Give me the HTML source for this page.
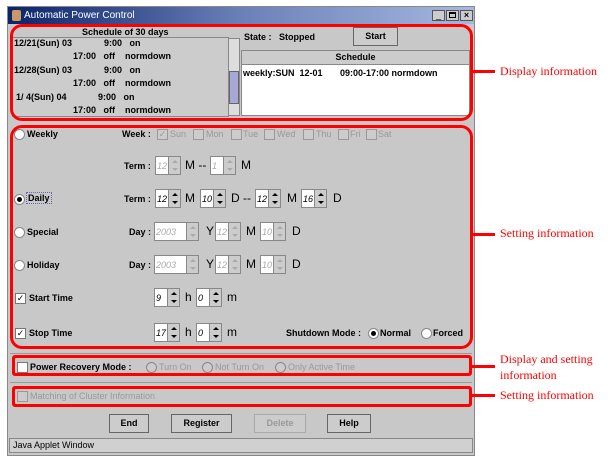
<!DOCTYPE html>
<html><head><meta charset="utf-8"><style>
*{margin:0;padding:0;box-sizing:border-box}
body{width:612px;height:462px;background:#fff;position:relative;overflow:hidden;font-family:"Liberation Sans",sans-serif;font-size:9px;color:#000}
.a{position:absolute;white-space:nowrap}
.b{font-weight:bold}
.g{color:#999}
.sp{position:absolute;height:19px}
.sp .t{position:absolute;left:0;top:0;bottom:0;background:#fff;border:1px solid #888;border-right:none;font-style:italic;font-size:9px;padding:4px 0 0 1px;overflow:hidden}
.sp .u{position:absolute;top:0;bottom:0;width:13px;background:#ccc;border:1px solid #888}
.sp .u:before{content:"";position:absolute;left:3px;top:3px;border:3px solid transparent;border-top:none;border-bottom:3px solid #000}
.sp .u:after{content:"";position:absolute;left:3px;bottom:3px;border:3px solid transparent;border-bottom:none;border-top:3px solid #000}
.sp.d .t{color:#aaa}
.sp.d .u:before{border-bottom-color:#aaa}.sp.d .u:after{border-top-color:#aaa}
.rd{position:absolute;width:11px;height:11px;border-radius:50%;background:#fff;border:1px solid #888}
.rd.on:after{content:"";position:absolute;left:2px;top:2px;width:5px;height:5px;border-radius:50%;background:#000}
.ck{position:absolute;width:11px;height:11px;background:#fff;border:1px solid #777;font-size:9px;line-height:9px;text-align:center}
.ck.dis{background:#ccc;border-color:#999;color:#999}
.red{position:absolute;border:3px solid #f00;border-radius:12px}
.ann{position:absolute;color:#f00;font-family:"Liberation Serif",serif;font-size:12px;white-space:nowrap}
.ln{position:absolute;height:3px;background:#f00}
.btn{position:absolute;height:19px;border:1px solid #666;background:#ccc;font-weight:bold;text-align:center;line-height:17px}
.L{font-size:12px}
</style></head><body>
<div class="a" style="left:7px;top:6px;width:468px;height:450px;background:#c8c8c8;border:1px solid #888"></div>
<div class="a" style="left:8px;top:7px;width:466px;height:17px;background:linear-gradient(90deg,#0a246a,#6a80b8 50%,#a6b8e0)"></div>
<div class="a" style="left:24px;top:10px;color:#fff;font-size:10px">Automatic Power Control</div>
<div class="a" style="left:12px;top:10px;width:9px;height:11px;background:#c96;border-radius:2px"></div>
<div class="a" style="left:432px;top:10px;width:13px;height:11px;background:#ccc;border:1px solid #555;font-size:9px;line-height:8px;text-align:center">_</div>
<div class="a" style="left:446px;top:10px;width:13px;height:11px;background:#ccc;border:1px solid #555"><div style="margin:1px 2px;width:7px;height:6px;border:1px solid #000;border-top-width:2px"></div></div>
<div class="a" style="left:460px;top:10px;width:13px;height:11px;background:#ccc;border:1px solid #555;font-size:9px;line-height:9px;text-align:center;font-weight:bold">×</div>

<div class="a b" style="left:82px;top:27px">Schedule of 30 days</div>
<div class="a" style="left:12px;top:37px;width:217px;height:80px;background:#ccc;border:1px solid #888"></div>
<div class="a b" style="left:14px;top:38px">12/21(Sun) 03</div><div class="a b" style="left:104px;top:38px">9:00&nbsp;&nbsp; on</div>
<div class="a b" style="left:73px;top:51px">17:00&nbsp;&nbsp; off&nbsp;&nbsp;&nbsp; normdown</div>
<div class="a b" style="left:14px;top:65px">12/28(Sun) 03</div><div class="a b" style="left:104px;top:65px">9:00&nbsp;&nbsp; on</div>
<div class="a b" style="left:73px;top:78px">17:00&nbsp;&nbsp; off&nbsp;&nbsp;&nbsp; normdown</div>
<div class="a b" style="left:16px;top:92px">1/ 4(Sun) 04</div><div class="a b" style="left:98px;top:92px">9:00&nbsp;&nbsp; on</div>
<div class="a b" style="left:73px;top:105px">17:00&nbsp;&nbsp; off&nbsp;&nbsp;&nbsp; normdown</div>
<div class="a" style="left:228px;top:38px;width:12px;height:78px;background:#ddd;border:1px solid #888"></div>
<div class="a" style="left:229px;top:71px;width:10px;height:33px;background:#a8a8d8;border:1px solid #666"></div>

<div class="a b" style="left:244px;top:32px">State :&nbsp;&nbsp; Stopped</div>
<div class="btn" style="left:353px;top:27px;width:45px">Start</div>
<div class="a" style="left:241px;top:50px;width:229px;height:66px;background:#fff;border:1px solid #888"></div>
<div class="a b" style="left:242px;top:51px;width:227px;height:14px;background:#ccc;border-bottom:1px solid #888;text-align:center;line-height:13px">Schedule</div>
<div class="a b" style="left:243px;top:68px">weekly:SUN&nbsp; 12-01</div>
<div class="a b" style="left:340px;top:68px">09:00-17:00 normdown</div>

<div class="rd" style="left:14px;top:129px"></div><div class="a b" style="left:27px;top:129px">Weekly</div>
<div class="a b" style="left:122px;top:129px">Week :</div>
<div class="ck dis" style="left:157px;top:129px">✓</div><div class="a g" style="left:170px;top:129px">Sun</div>
<div class="ck dis" style="left:193px;top:129px"></div><div class="a g" style="left:206px;top:129px">Mon</div>
<div class="ck dis" style="left:231px;top:129px"></div><div class="a g" style="left:243px;top:129px">Tue</div>
<div class="ck dis" style="left:264px;top:129px"></div><div class="a g" style="left:277px;top:129px">Wed</div>
<div class="ck dis" style="left:303px;top:129px"></div><div class="a g" style="left:316px;top:129px">Thu</div>
<div class="ck dis" style="left:338px;top:129px"></div><div class="a g" style="left:350px;top:129px">Fri</div>
<div class="ck dis" style="left:366px;top:129px"></div><div class="a g" style="left:378px;top:129px">Sat</div>

<div class="a b" style="left:124px;top:161px">Term :</div>
<div class="sp d" style="left:155px;top:156px;width:26px"><div class="t" style="width:13px">12</div><div class="u" style="left:13px"></div></div>
<div class="a L" style="left:185px;top:158px">M --</div>
<div class="sp d" style="left:210px;top:156px;width:26px"><div class="t" style="width:13px">1</div><div class="u" style="left:13px"></div></div>
<div class="a L" style="left:241px;top:158px">M</div>

<div class="rd on" style="left:14px;top:194px"></div><div class="a b" style="left:26px;top:192px;border:1px dotted #66a;padding:0 1px">Daily</div>
<div class="a b" style="left:124px;top:194px">Term :</div>
<div class="sp" style="left:155px;top:189px;width:26px"><div class="t" style="width:13px">12</div><div class="u" style="left:13px"></div></div>
<div class="a L" style="left:185px;top:191px">M</div>
<div class="sp" style="left:200px;top:189px;width:26px"><div class="t" style="width:13px">10</div><div class="u" style="left:13px"></div></div>
<div class="a L" style="left:231px;top:191px">D --</div>
<div class="sp" style="left:255px;top:189px;width:26px"><div class="t" style="width:13px">12</div><div class="u" style="left:13px"></div></div>
<div class="a L" style="left:287px;top:191px">M</div>
<div class="sp" style="left:301px;top:189px;width:26px"><div class="t" style="width:13px">16</div><div class="u" style="left:13px"></div></div>
<div class="a L" style="left:333px;top:191px">D</div>

<div class="rd" style="left:14px;top:227px"></div><div class="a b" style="left:27px;top:227px">Special</div>
<div class="a b" style="left:129px;top:227px">Day :</div>
<div class="sp d" style="left:154px;top:222px;width:45px"><div class="t" style="width:32px">2003</div><div class="u" style="left:32px"></div></div>
<div class="a L" style="left:206px;top:224px">Y</div>
<div class="sp d" style="left:215px;top:222px;width:26px"><div class="t" style="width:13px">12</div><div class="u" style="left:13px"></div></div>
<div class="a L" style="left:246px;top:224px">M</div>
<div class="sp d" style="left:260px;top:222px;width:26px"><div class="t" style="width:13px">10</div><div class="u" style="left:13px"></div></div>
<div class="a L" style="left:292px;top:224px">D</div>

<div class="rd" style="left:14px;top:260px"></div><div class="a b" style="left:27px;top:260px">Holiday</div>
<div class="a b" style="left:129px;top:260px">Day :</div>
<div class="sp d" style="left:154px;top:255px;width:45px"><div class="t" style="width:32px">2003</div><div class="u" style="left:32px"></div></div>
<div class="a L" style="left:206px;top:257px">Y</div>
<div class="sp d" style="left:215px;top:255px;width:26px"><div class="t" style="width:13px">12</div><div class="u" style="left:13px"></div></div>
<div class="a L" style="left:246px;top:257px">M</div>
<div class="sp d" style="left:260px;top:255px;width:26px"><div class="t" style="width:13px">10</div><div class="u" style="left:13px"></div></div>
<div class="a L" style="left:292px;top:257px">D</div>

<div class="ck" style="left:15px;top:293px">✓</div><div class="a b" style="left:29px;top:293px">Start Time</div>
<div class="sp" style="left:154px;top:288px;width:26px"><div class="t" style="width:13px">9</div><div class="u" style="left:13px"></div></div>
<div class="a L" style="left:185px;top:290px">h</div>
<div class="sp" style="left:196px;top:288px;width:26px"><div class="t" style="width:13px">0</div><div class="u" style="left:13px"></div></div>
<div class="a L" style="left:227px;top:290px">m</div>

<div class="ck" style="left:15px;top:328px">✓</div><div class="a b" style="left:29px;top:328px">Stop Time</div>
<div class="sp" style="left:154px;top:323px;width:26px"><div class="t" style="width:13px">17</div><div class="u" style="left:13px"></div></div>
<div class="a L" style="left:185px;top:325px">h</div>
<div class="sp" style="left:196px;top:323px;width:26px"><div class="t" style="width:13px">0</div><div class="u" style="left:13px"></div></div>
<div class="a L" style="left:227px;top:325px">m</div>
<div class="a b" style="left:286px;top:328px">Shutdown Mode :</div>
<div class="rd on" style="left:368px;top:328px"></div><div class="a b" style="left:380px;top:328px">Normal</div>
<div class="rd" style="left:421px;top:328px"></div><div class="a b" style="left:433px;top:328px">Forced</div>

<div class="a" style="left:10px;top:353px;width:462px;height:1px;background:#999"></div>
<div class="ck" style="left:17px;top:362px"></div><div class="a b" style="left:30px;top:362px">Power Recovery Mode :</div>
<div class="rd" style="left:146px;top:362px;background:#ccc"></div><div class="a g" style="left:159px;top:362px">Turn On</div>
<div class="rd" style="left:202px;top:362px;background:#ccc"></div><div class="a g" style="left:215px;top:362px">Not Turn On</div>
<div class="rd" style="left:275px;top:362px;background:#ccc"></div><div class="a g" style="left:288px;top:362px">Only Active Time</div>
<div class="a" style="left:10px;top:382px;width:462px;height:1px;background:#999"></div>
<div class="ck dis" style="left:17px;top:391px"></div><div class="a g" style="left:30px;top:391px">Matching of Cluster Information</div>

<div class="btn" style="left:109px;top:414px;width:40px">End</div>
<div class="btn" style="left:171px;top:414px;width:61px">Register</div>
<div class="btn" style="left:254px;top:414px;width:52px;color:#999;border-color:#aaa">Delete</div>
<div class="btn" style="left:327px;top:414px;width:44px">Help</div>
<div class="a" style="left:9px;top:438px;width:464px;height:15px;background:#d0d0d0;border:1px solid #888;padding-left:3px;font-size:9px;line-height:13px">Java Applet Window</div>

<div class="red" style="left:10px;top:24px;width:463px;height:97px"></div>
<div class="red" style="left:10px;top:125px;width:463px;height:224px"></div>
<div class="red" style="left:12px;top:355px;width:460px;height:21px;border-radius:3px"></div>
<div class="red" style="left:12px;top:386px;width:460px;height:21px;border-radius:3px"></div>

<div class="ln" style="left:472px;top:70px;width:23px"></div>
<div class="ann" style="left:500px;top:64px">Display information</div>
<div class="ln" style="left:472px;top:233px;width:23px"></div>
<div class="ann" style="left:500px;top:226px">Setting information</div>
<div class="ln" style="left:472px;top:365px;width:23px"></div>
<div class="ann" style="left:500px;top:351px;line-height:16px">Display and setting<br>information</div>
<div class="ln" style="left:472px;top:394px;width:23px"></div>
<div class="ann" style="left:500px;top:388px">Setting information</div>
</body></html>
